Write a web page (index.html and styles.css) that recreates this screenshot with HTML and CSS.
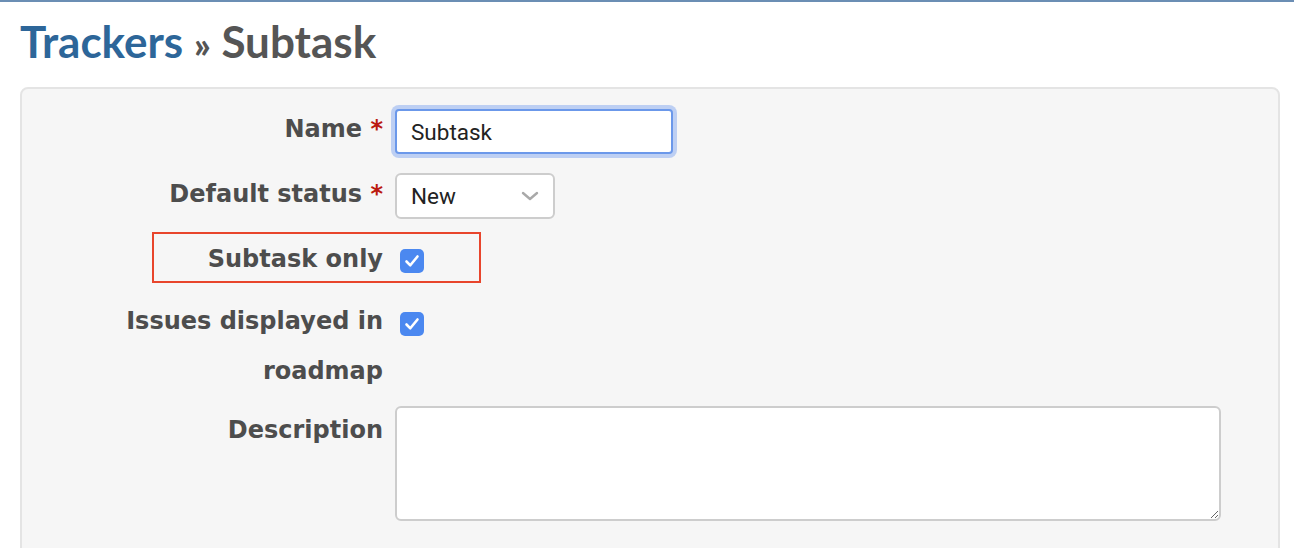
FILE: index.html
```html
<!DOCTYPE html>
<html lang="en">
<head>
  <meta charset="UTF-8">
  <title>Trackers » Subtask</title>
  <link rel="stylesheet" href="styles.css">
</head>
<body>
  <div class="top-line"></div>
  <div class="content">
    <h2><a href="#">Trackers</a> <span class="sep">»</span> Subtask</h2>

    <div class="box tabular">
      <p class="row row-name">
        <label for="name">Name <span class="required">*</span></label>
        <span class="field"><input type="text" id="name" class="text-input" value="Subtask"></span>
      </p>

      <p class="row row-status">
        <label for="status">Default status <span class="required">*</span></label>
        <span class="field">
          <span class="select">
            New
            <svg class="chevron" width="18" height="10" viewBox="0 0 18 10"><path d="M2 2 L9 8 L16 2" fill="none" stroke="#a9a9a9" stroke-width="2.4" stroke-linecap="round" stroke-linejoin="round"/></svg>
          </span>
        </span>
      </p>

      <p class="row row-check row-subtask">
        <label>Subtask only</label>
        <span class="field"><span class="checkbox"><svg width="24" height="24" viewBox="0 0 24 24"><path d="M6.5 12.5 L10.3 16.3 L17.5 7.5" fill="none" stroke="#fff" stroke-width="2.6" stroke-linecap="round" stroke-linejoin="round"/></svg></span></span>
        <span class="highlight-box"></span>
      </p>

      <p class="row row-check row-roadmap">
        <label>Issues displayed in roadmap</label>
        <span class="field"><span class="checkbox"><svg width="24" height="24" viewBox="0 0 24 24"><path d="M6.5 12.5 L10.3 16.3 L17.5 7.5" fill="none" stroke="#fff" stroke-width="2.6" stroke-linecap="round" stroke-linejoin="round"/></svg></span></span>
      </p>

      <p class="row row-description">
        <label for="description">Description</label>
        <span class="field"><textarea id="description"></textarea></span>
      </p>
    </div>
  </div>
</body>
</html>
```

FILE: styles.css
```css
body {
  margin: 0;
  padding: 0;
  background: #fff;
  color: #4d4d4d;
  font-family: 'DejaVu Sans', Verdana, sans-serif;
}

.top-line {
  height: 2px;
  background: #6b8eb4;
}

.content {
  padding: 0 14px 0 20px;
}

h2 {
  margin: 14px 0 21px;
  font-family: Lato, 'Open Sans', sans-serif;
  font-size: 44px;
  line-height: 50px;
  height: 50px;
  font-weight: bold;
  color: #555;
}

h2 a {
  color: #2d6699;
  text-decoration: none;
}

.sep {
  font-size: 36px;
  font-weight: 900;
  line-height: 0;
}

.box {
  background: #f6f6f6;
  border: 2px solid #e4e4e4;
  border-radius: 8px;
  padding: 15px 0 40px;
}

.row {
  display: flex;
  align-items: flex-start;
  margin: 0 0 15px;
  position: relative;
}

.row label {
  width: 361px;
  flex: none;
  text-align: right;
  font-size: 24px;
  font-weight: bold;
  line-height: 50px;
  color: #4d4d4d;
}

.required {
  color: #bb1a10;
}

.field {
  margin-left: 12px;
  display: flex;
}

.text-input {
  box-sizing: border-box;
  width: 278px;
  height: 45px;
  margin-top: 5px;
  padding: 0 14px;
  border: 2px solid #6b98ea;
  border-radius: 4px;
  box-shadow: 0 0 0 4px rgba(120, 160, 240, 0.45);
  font-family: Roboto, 'Liberation Sans', sans-serif;
  font-size: 22.5px;
  color: #222;
  background: #fff;
  outline: none;
}

.select {
  box-sizing: border-box;
  width: 160px;
  height: 46px;
  margin-top: 4px;
  padding: 0 14px;
  border: 2px solid #cdcdcd;
  border-radius: 6px;
  background: #fff;
  display: flex;
  align-items: center;
  justify-content: space-between;
  font-family: Roboto, 'Liberation Sans', sans-serif;
  font-size: 22.5px;
  color: #222;
}

.row-check {
  margin-bottom: 12px;
}

.row-roadmap {
  margin-bottom: 9px;
}

.checkbox {
  width: 24px;
  height: 24px;
  margin: 15px 0 0 5px;
  border-radius: 5px;
  background: #4b88f0;
  display: block;
}

.checkbox svg {
  display: block;
}

.row-roadmap .checkbox {
  margin-top: 16px;
}

.highlight-box {
  position: absolute;
  left: 130px;
  top: -2px;
  width: 325px;
  height: 47px;
  border: 2px solid #e8452c;
}

textarea {
  box-sizing: border-box;
  width: 826px;
  height: 115px;
  margin-top: 1px;
  border: 2px solid #cdcdcd;
  border-radius: 6px;
  background: #fff;
  font-family: Roboto, 'Liberation Sans', sans-serif;
  font-size: 20px;
}
```
